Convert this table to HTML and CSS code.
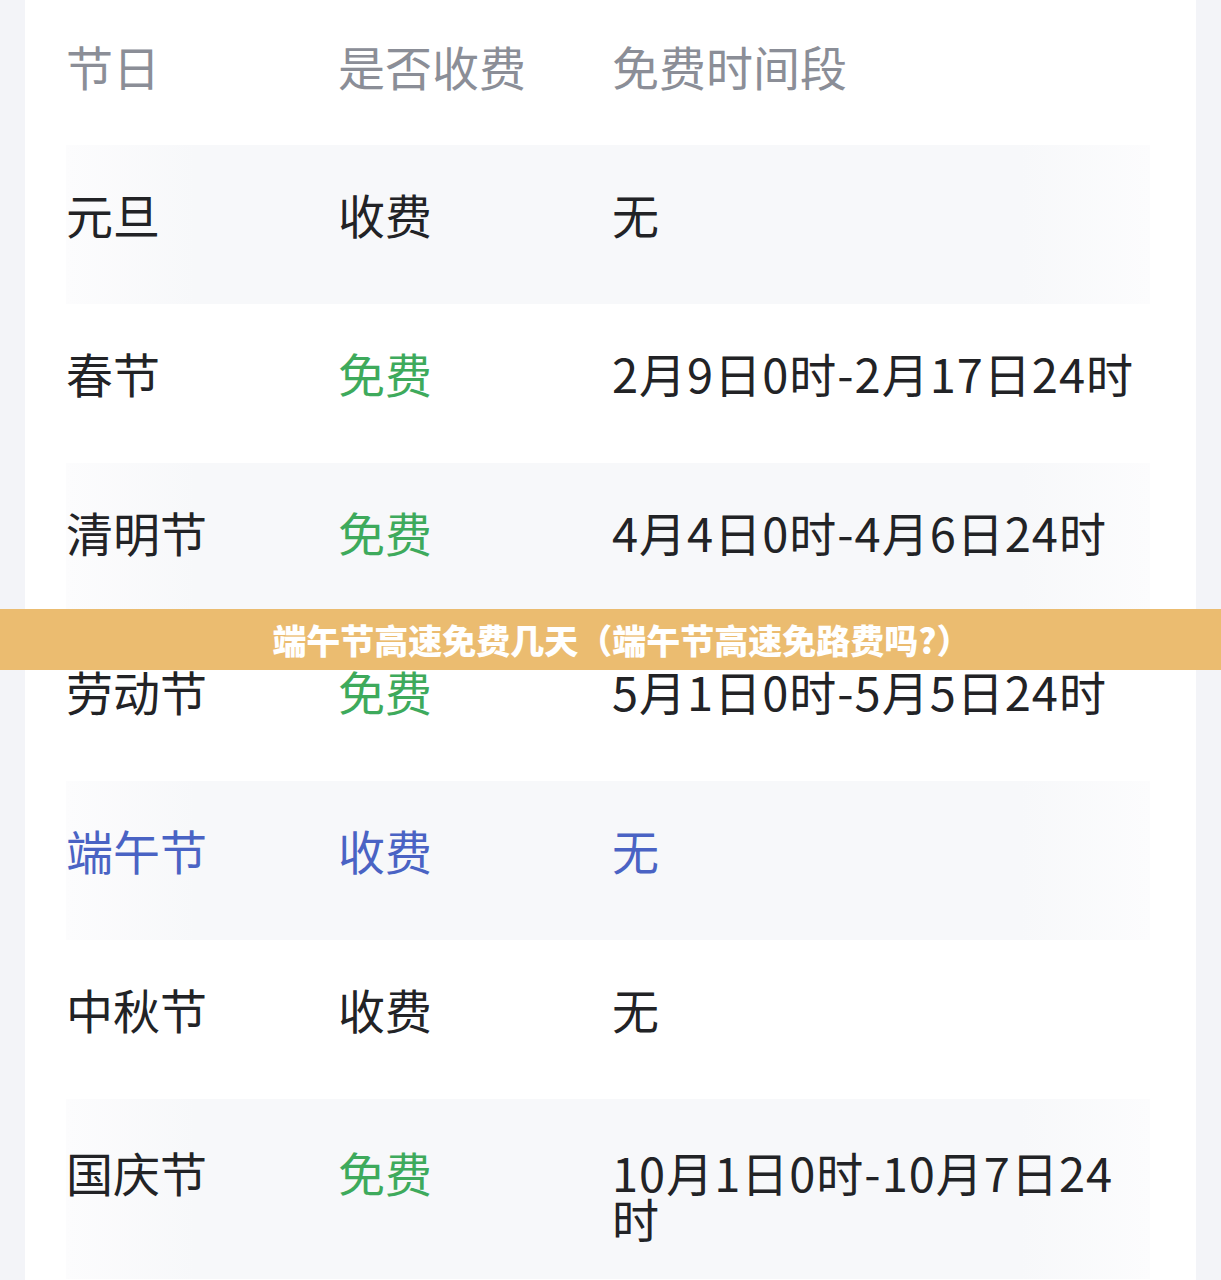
FILE: index.html
```html
<!DOCTYPE html>
<html lang="zh-CN">
<head>
    <meta charset="UTF-8">
    <meta name="viewport" content="width=device-width, initial-scale=1.0">
    <title>端午节高速免费几天</title>
    <link rel="stylesheet" href="styles.css">
</head>
<body>

<div class="pagina">
    <div class="tabla">
        <div class="fila cabecera">
            <span>节日</span>
            <span>是否收费</span>
            <span>免费时间段</span>
        </div>
        <div class="fila gris">
            <span>元旦</span>
            <span>收费</span>
            <span>无</span>
        </div>
        <div class="fila">
            <span>春节</span>
            <span class="verde">免费</span>
            <span class="periodo">2月9日0时-2月17日24时</span>
        </div>
        <div class="fila gris">
            <span>清明节</span>
            <span class="verde">免费</span>
            <span class="periodo">4月4日0时-4月6日24时</span>
        </div>
        <div class="fila">
            <span>劳动节</span>
            <span class="verde">免费</span>
            <span class="periodo">5月1日0时-5月5日24时</span>
        </div>
        <div class="fila gris azul">
            <span>端午节</span>
            <span>收费</span>
            <span>无</span>
        </div>
        <div class="fila">
            <span>中秋节</span>
            <span>收费</span>
            <span>无</span>
        </div>
        <div class="fila gris">
            <span>国庆节</span>
            <span class="verde">免费</span>
            <span class="periodo">10月1日0时-10月7日24时</span>
        </div>
    </div>
</div>

<div class="titulo">端午节高速免费几天（端午节高速免路费吗?）</div>

</body>
</html>
```

FILE: styles.css
```css
body {
    margin: 0;
    padding: 0;
    background-color: #f3f4f8;
    font-family: "PingFang SC", "Noto Sans CJK SC", "Noto Sans", sans-serif;
    color: #222326;
    height: 1280px;
    overflow: hidden;
    position: relative;
}

.pagina {
    margin: 0 25px;
    background-color: white;
    height: 1280px;
}

.tabla {
    display: flex;
    flex-direction: column;
}

.fila {
    display: grid;
    grid-template-columns: 272px 274px 530px;
    align-items: start;
    height: 159px;
    box-sizing: border-box;
    padding: 45px 0 0 0;
    margin: 0 46px 0 41px;
    font-size: 47px;
    line-height: 48px;
}

.fila.gris {
    background: linear-gradient(90deg, #fcfcfd 0, #f7f8fa 12%, #f7f8fa 88%, #fcfcfd 100%);
}

.fila.cabecera {
    height: 145px;
    padding-top: 42px;
    color: #8b8e97;
}

.fila.gris:last-child {
    height: 180px;
    padding-top: 50px;
    line-height: 46px;
}

.periodo {
    letter-spacing: 1px;
}

.verde {
    color: #3eaa5c;
}

.azul {
    color: #4a63c4;
}

/* franja del titulo, encima de la tabla */
.titulo {
    position: absolute;
    top: 609px;
    left: 0;
    right: 0;
    height: 61px;
    line-height: 61px;
    padding-left: 22px;
    background-color: #ebbc70;
    color: white;
    font-size: 34px;
    font-weight: 900;
    text-align: center;
}
```
